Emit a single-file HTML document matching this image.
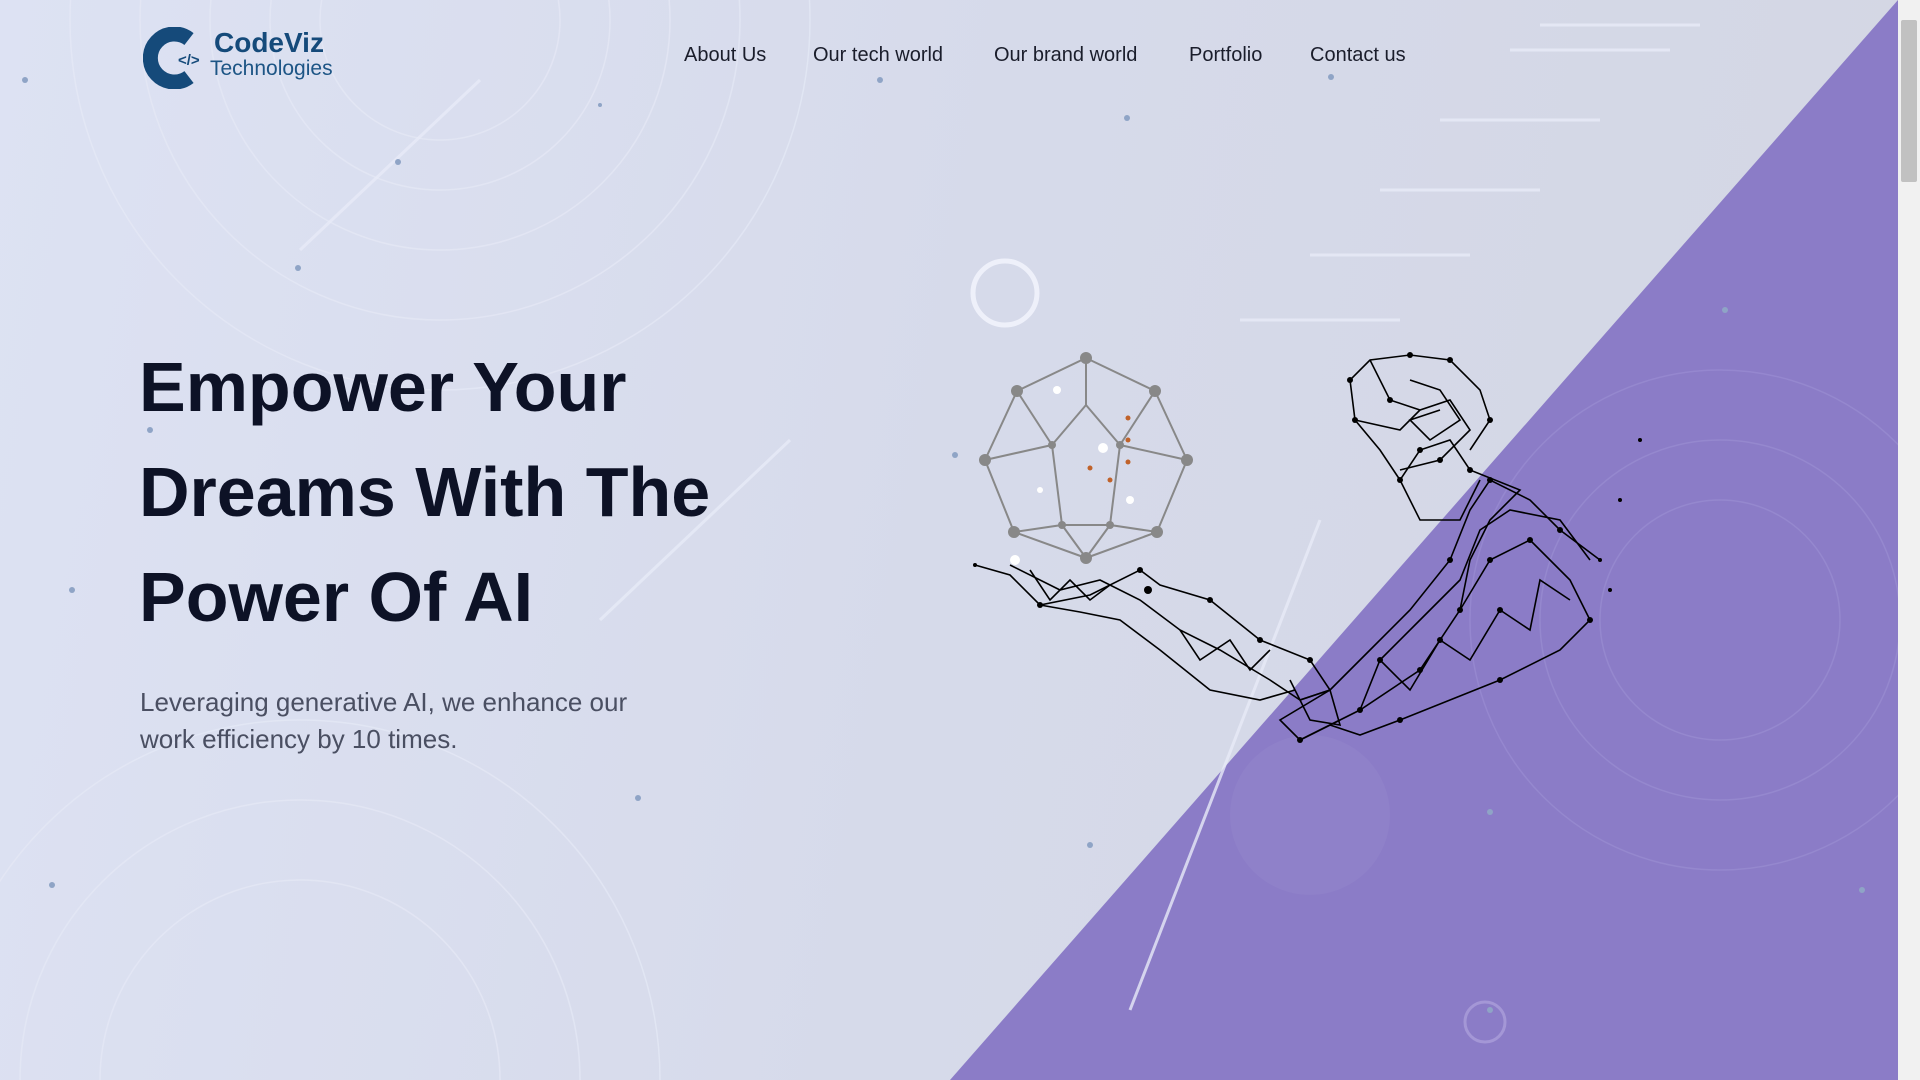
<!DOCTYPE html>
<html><head><meta charset="utf-8"><style>
*{margin:0;padding:0;box-sizing:border-box}
html,body{width:1920px;height:1080px;overflow:hidden}
body{font-family:"Liberation Sans",sans-serif;position:relative;background:linear-gradient(100deg,#dde2f3 0%,#d6daea 50%,#d3d6e3 100%)}
.cv{position:absolute;left:214px;top:27px;font-size:28px;font-weight:bold;color:#154a7a}
.tech{position:absolute;left:210px;top:57px;font-size:21px;color:#1d5585}
nav{position:absolute;top:44px;left:684px;font-size:20px;color:#1a1d2b}
nav span{position:absolute;white-space:nowrap}
h1{position:absolute;left:139px;top:335px;font-size:70px;line-height:105px;font-weight:bold;color:#0d1226}
p{position:absolute;left:140px;top:684px;font-size:26px;line-height:37px;color:#4a4f62}
.sb{position:absolute;right:0;top:0;width:22px;height:1080px;background:#f1f1f1}
.th{position:absolute;right:3px;top:20px;width:16px;height:162px;background:#c1c1c1;border-radius:2px}
</style></head><body>
<svg style="position:absolute;left:0;top:0" width="1898" height="1080">
<polygon points="1898,0 1898,1080 950,1080" fill="#8b7cc7"/>
<g fill="none" stroke="#e6e9f6" stroke-width="1.5" opacity=".7">
<circle cx="440" cy="20" r="120"/><circle cx="440" cy="20" r="170"/><circle cx="440" cy="20" r="230"/><circle cx="440" cy="20" r="300"/><circle cx="440" cy="20" r="370"/>
<circle cx="300" cy="1080" r="200"/><circle cx="300" cy="1080" r="280"/><circle cx="300" cy="1080" r="360"/>
</g>
<g fill="none" stroke="#9c90d3" stroke-width="1.5" opacity=".6">
<circle cx="1720" cy="620" r="120"/><circle cx="1720" cy="620" r="180"/><circle cx="1720" cy="620" r="250"/></g>
<circle cx="1005" cy="293" r="32" fill="none" stroke="#eef0fa" stroke-width="5"/>
<circle cx="1485" cy="1022" r="20" fill="none" stroke="#a497d6" stroke-width="3"/>
<circle cx="1310" cy="815" r="80" fill="#9385cc" opacity=".5"/>
<g stroke="#e8ebf8" stroke-width="3" opacity=".8"><line x1="1130" y1="1010" x2="1320" y2="520"/><line x1="600" y1="620" x2="790" y2="440"/><line x1="300" y1="250" x2="480" y2="80"/></g>
<g stroke="#e4e7f4" stroke-width="3"><line x1="1540" y1="25" x2="1700" y2="25"/><line x1="1510" y1="50" x2="1670" y2="50"/><line x1="1440" y1="120" x2="1600" y2="120"/><line x1="1380" y1="190" x2="1540" y2="190"/><line x1="1310" y1="255" x2="1470" y2="255"/><line x1="1240" y1="320" x2="1400" y2="320"/></g>
<g fill="#8fa4c6"><circle cx="398" cy="162" r="3"/><circle cx="298" cy="268" r="3"/><circle cx="150" cy="430" r="3"/><circle cx="72" cy="590" r="3"/><circle cx="638" cy="798" r="3"/><circle cx="52" cy="885" r="3"/><circle cx="1090" cy="845" r="3"/><circle cx="1490" cy="812" r="3"/><circle cx="1862" cy="890" r="3"/><circle cx="1331" cy="77" r="3"/><circle cx="880" cy="80" r="3"/><circle cx="1127" cy="118" r="3"/><circle cx="1725" cy="310" r="3"/><circle cx="955" cy="455" r="3"/><circle cx="25" cy="80" r="3"/><circle cx="600" cy="105" r="2"/><circle cx="1490" cy="1010" r="3"/></g>
<g stroke="#888" stroke-width="2" fill="none">
<polygon points="1086,358 1155,391 1187,460 1157,532 1086,558 1014,532 985,460 1017,391"/>
<polyline points="1017,391 1052,445 1086,405 1120,445 1155,391"/><line x1="1086" y1="358" x2="1086" y2="405"/>
<polyline points="985,460 1052,445 1062,525 1110,525 1120,445 1187,460"/><polyline points="1014,532 1062,525 1086,558 1110,525 1157,532"/>
</g>
<g fill="#888"><circle cx="1086" cy="358" r="6"/><circle cx="1155" cy="391" r="6"/><circle cx="1187" cy="460" r="6"/><circle cx="1157" cy="532" r="6"/><circle cx="1086" cy="558" r="6"/><circle cx="1014" cy="532" r="6"/><circle cx="985" cy="460" r="6"/><circle cx="1017" cy="391" r="6"/><circle cx="1052" cy="445" r="4"/><circle cx="1120" cy="445" r="4"/><circle cx="1062" cy="525" r="4"/><circle cx="1110" cy="525" r="4"/></g>
<g fill="#c0622a"><circle cx="1128" cy="418" r="2.5"/><circle cx="1128" cy="440" r="2.5"/><circle cx="1128" cy="462" r="2.5"/><circle cx="1110" cy="480" r="2.5"/><circle cx="1090" cy="468" r="2.5"/></g>
<g fill="#fff"><circle cx="1057" cy="390" r="4"/><circle cx="1103" cy="448" r="5"/><circle cx="1040" cy="490" r="3"/><circle cx="1130" cy="500" r="4"/><circle cx="1015" cy="560" r="5"/></g>
<g stroke="#000" stroke-width="1.6" fill="none">
<polyline points="975,565 1010,575 1040,605 1090,595 1140,570 1160,585 1210,600 1260,640 1310,660 1330,690 1280,720 1300,740 1340,720"/>
<polyline points="1010,565 1060,590 1100,580 1140,600 1180,630 1220,650 1270,680 1300,700 1330,690"/>
<polyline points="1040,605 1080,612 1120,620 1160,650 1210,690 1260,700 1295,690"/>
<polyline points="1030,570 1050,600 1070,580 1090,600 1110,585"/><polyline points="1180,630 1200,660 1230,640 1250,670 1270,650"/>
<polyline points="1300,740 1360,710 1420,670 1460,610 1490,560 1530,540 1570,580 1590,620 1560,650 1500,680 1450,700 1400,720 1360,735 1330,725"/>
<polyline points="1330,690 1370,650 1410,610 1450,560 1470,510 1490,480 1530,500 1560,530 1600,560"/>
<polyline points="1360,710 1380,660 1420,620 1460,580 1480,530 1510,510 1560,520 1590,560"/>
<polyline points="1380,660 1410,690 1440,640 1470,660 1500,610 1530,630 1540,580 1570,600"/>
<polyline points="1460,610 1470,560 1490,520 1520,490 1470,470 1450,440 1420,450 1400,480 1420,520 1460,520 1480,480"/>
<polyline points="1400,480 1380,450 1355,420 1350,380 1370,360 1410,355 1450,360 1480,390 1490,420 1470,450"/>
<polyline points="1370,360 1390,400 1420,410 1450,400 1470,430 1440,460 1400,470"/><polyline points="1355,420 1400,430 1420,410"/>
<polyline points="1410,380 1440,390 1460,420 1430,440 1410,420 1440,410"/>
<polyline points="1290,680 1310,720 1340,725 1330,690 1300,700"/>
</g>
<g fill="#000"><circle cx="975" cy="565" r="2"/><circle cx="1040" cy="605" r="3"/><circle cx="1140" cy="570" r="3"/><circle cx="1210" cy="600" r="3"/><circle cx="1260" cy="640" r="3"/><circle cx="1310" cy="660" r="3"/><circle cx="1300" cy="740" r="3"/><circle cx="1360" cy="710" r="3"/><circle cx="1420" cy="670" r="3"/><circle cx="1460" cy="610" r="3"/><circle cx="1490" cy="560" r="3"/><circle cx="1530" cy="540" r="3"/><circle cx="1590" cy="620" r="3"/><circle cx="1500" cy="680" r="3"/><circle cx="1400" cy="720" r="3"/><circle cx="1450" cy="560" r="3"/><circle cx="1490" cy="480" r="3"/><circle cx="1560" cy="530" r="3"/><circle cx="1470" cy="470" r="3"/><circle cx="1420" cy="450" r="3"/><circle cx="1400" cy="480" r="3"/><circle cx="1355" cy="420" r="3"/><circle cx="1350" cy="380" r="3"/><circle cx="1410" cy="355" r="3"/><circle cx="1450" cy="360" r="3"/><circle cx="1490" cy="420" r="3"/><circle cx="1390" cy="400" r="3"/><circle cx="1440" cy="460" r="3"/><circle cx="1600" cy="560" r="2"/><circle cx="1620" cy="500" r="2"/><circle cx="1640" cy="440" r="2"/><circle cx="1610" cy="590" r="2"/><circle cx="1148" cy="590" r="4"/><circle cx="1380" cy="660" r="3"/><circle cx="1440" cy="640" r="3"/><circle cx="1500" cy="610" r="3"/></g>
</svg>
<svg style="position:absolute;left:143px;top:27px" width="70" height="62" viewBox="0 0 70 62"><path d="M46 12 A24 24 0 1 0 46 50" fill="none" stroke="#154a7a" stroke-width="15"/><text x="35" y="38" font-family="Liberation Sans" font-weight="bold" font-size="15" fill="#154a7a">&lt;/&gt;</text></svg>
<div class="cv">CodeViz</div><div class="tech">Technologies</div>
<nav><span style="left:0">About Us</span><span style="left:129px">Our tech world</span><span style="left:310px">Our brand world</span><span style="left:505px">Portfolio</span><span style="left:626px">Contact us</span></nav>
<h1>Empower Your<br>Dreams With The<br>Power Of AI</h1>
<p>Leveraging generative AI, we enhance our<br>work efficiency by 10 times.</p>
<div class="sb"><div class="th"></div></div>
</body></html>
